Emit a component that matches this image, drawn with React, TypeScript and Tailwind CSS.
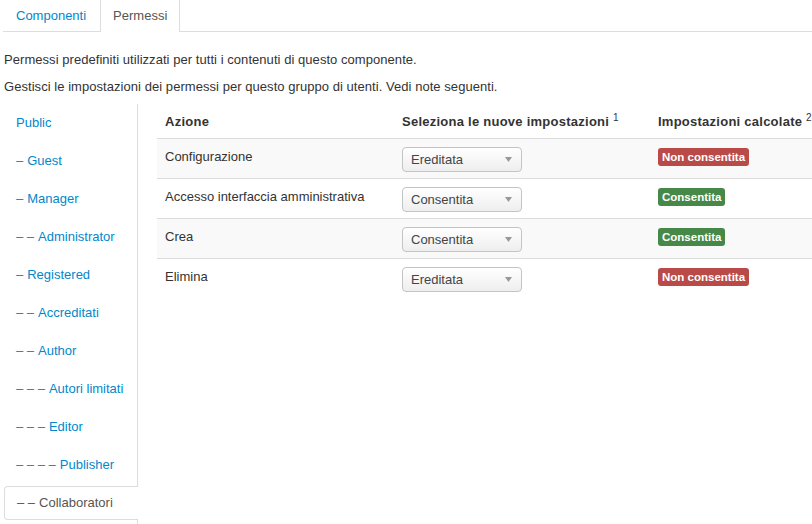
import React from 'react';

const groups = [
    { label: 'Public', depth: 0 },
    { label: 'Guest', depth: 1 },
    { label: 'Manager', depth: 1 },
    { label: 'Administrator', depth: 2 },
    { label: 'Registered', depth: 1 },
    { label: 'Accreditati', depth: 2 },
    { label: 'Author', depth: 2 },
    { label: 'Autori limitati', depth: 3 },
    { label: 'Editor', depth: 3 },
    { label: 'Publisher', depth: 4 },
    { label: 'Collaboratori', depth: 2, active: true },
];

const actions = [
    { name: 'Configurazione', value: 'Ereditata', allowed: false },
    { name: 'Accesso interfaccia amministrativa', value: 'Consentita', allowed: true },
    { name: 'Crea', value: 'Consentita', allowed: true },
    { name: 'Elimina', value: 'Ereditata', allowed: false },
];

const FakeSelect: React.FC<{ value: string }> = ({ value }) => (
    <div className="w-[120px] h-[25px] rounded-[4px] border border-[#c4c4c4] bg-gradient-to-b from-white to-[#eeeeee] flex items-center justify-between pl-[8px] pr-[9px] text-[13px] text-[#444]">
        <span className="pt-[2px]">{value}</span>
        <svg width="7" height="5" viewBox="0 0 7 5" className="mt-[1px]">
            <path d="M0 0 L7 0 L3.5 5 Z" fill="#999" />
        </svg>
    </div>
);

const App: React.FC = () => {
    return (
        <div className="h-screen overflow-hidden bg-white text-[#333] text-[13px] leading-[18px] font-['Liberation_Sans',Arial,sans-serif]">
            {/* Tabs */}
            <ul className="flex ml-[3px] h-[32px] border-b border-[#dddddd]">
                <li className="h-[31px] pl-[13px] pr-[13px] flex items-center text-[#0088cc]">Componenti</li>
                <li className="h-[32px] -mb-px ml-[1px] px-[12px] flex items-center border border-t-0 border-b-0 border-[#dddddd] bg-white text-[#555]">
                    <span className="pb-[1px]">Permessi</span>
                </li>
            </ul>

            <div className="pl-[4px] pt-[19px]">
                <p className="mb-[9px] tracking-[0.05px]">Permessi predefiniti utilizzati per tutti i contenuti di questo componente.</p>
                <p className="mb-[8px] tracking-[0.05px]">Gestisci le impostazioni dei permessi per questo gruppo di utenti. Vedi note seguenti.</p>

                <div className="flex">
                    {/* Group list */}
                    <ul className="w-[134px] shrink-0 border-r border-[#dddddd] pt-[2px]">
                        {groups.map(g => (
                            <li key={g.label} className="mb-[4px]">
                                <div
                                    className={`h-[34px] pl-[12px] flex items-center whitespace-nowrap ${g.active ? '-mr-px bg-white border border-r-0 border-[#dddddd] rounded-l-[4px] text-[#555] pl-[11px]' : 'text-[#0088cc]'}`}
                                >
                                    {g.depth > 0 && <span className="mr-[4px]">{Array(g.depth).fill('–').join(' ')}</span>}
                                    {g.label}
                                </div>
                            </li>
                        ))}
                    </ul>

                    {/* Permissions table */}
                    <table className="ml-[19px] w-[720px] shrink-0 table-fixed border-collapse self-start">
                        <colgroup>
                            <col className="w-[237px]" />
                            <col className="w-[256px]" />
                            <col />
                        </colgroup>
                        <thead>
                            <tr className="h-[34px]">
                                <th className="px-[8px] text-left font-bold align-middle pt-[3px] tracking-[0.25px]">Azione</th>
                                <th className="px-[8px] text-left font-bold align-middle pt-[3px] whitespace-nowrap tracking-[0.25px]">
                                    Seleziona le nuove impostazioni <sup className="font-normal text-[10px] -top-[5px]">1</sup>
                                </th>
                                <th className="px-[8px] text-left font-bold align-middle pt-[3px] whitespace-nowrap tracking-[0.25px]">
                                    Impostazioni calcolate <sup className="font-normal text-[10px] -top-[5px]">2</sup>
                                </th>
                            </tr>
                        </thead>
                        <tbody>
                            {actions.map((a, i) => (
                                <tr key={a.name} className={`border-t border-[#dddddd] ${i % 2 === 0 ? 'bg-[#f9f9f9]' : 'bg-white'}`}>
                                    <td className="px-[8px] pt-[9px] pb-[6px] align-top">{a.name}</td>
                                    <td className="px-[8px] pt-[8px] pb-[6px] align-top">
                                        <FakeSelect value={a.value} />
                                    </td>
                                    <td className="px-[8px] pt-[9px] pb-[7px] align-top">
                                        <span
                                            className={`inline-block h-[18px] leading-[18px] px-[4px] rounded-[3px] text-white text-[11.5px] font-bold ${a.allowed ? 'bg-[#468847]' : 'bg-[#b94a48]'}`}
                                        >
                                            {a.allowed ? 'Consentita' : 'Non consentita'}
                                        </span>
                                    </td>
                                </tr>
                            ))}
                        </tbody>
                    </table>
                </div>
            </div>
        </div>
    );
};

export default App;
